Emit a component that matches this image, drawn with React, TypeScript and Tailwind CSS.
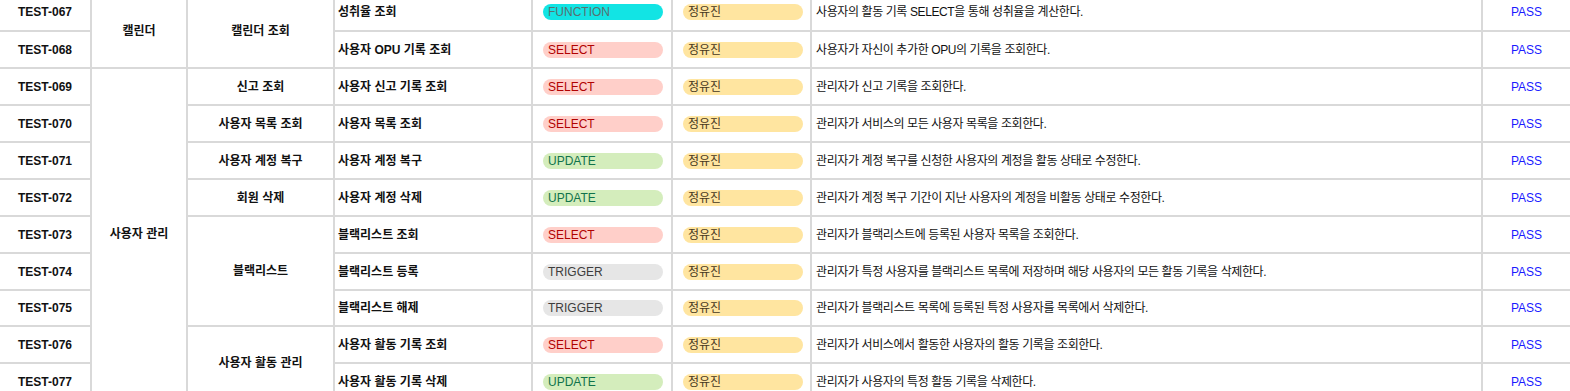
import React from "react";

type Kind = "FUNCTION" | "SELECT" | "UPDATE" | "TRIGGER";

interface Row {
  id: string;
  group?: { text: string; span: string };
  feature?: { text: string; span: string };
  name: string;
  kind: Kind;
  desc: string;
}

const rows: Row[] = [
  {
    id: "TEST-067",
    group: { text: "캘린더", span: "row-span-2" },
    feature: { text: "캘린더 조회", span: "row-span-2" },
    name: "성취율 조회",
    kind: "FUNCTION",
    desc: "사용자의 활동 기록 SELECT을 통해 성취율을 계산한다.",
  },
  { id: "TEST-068", name: "사용자 OPU 기록 조회", kind: "SELECT", desc: "사용자가 자신이 추가한 OPU의 기록을 조회한다." },
  {
    id: "TEST-069",
    group: { text: "사용자 관리", span: "row-span-9" },
    feature: { text: "신고 조회", span: "" },
    name: "사용자 신고 기록 조회",
    kind: "SELECT",
    desc: "관리자가 신고 기록을 조회한다.",
  },
  {
    id: "TEST-070",
    feature: { text: "사용자 목록 조회", span: "" },
    name: "사용자 목록 조회",
    kind: "SELECT",
    desc: "관리자가 서비스의 모든 사용자 목록을 조회한다.",
  },
  {
    id: "TEST-071",
    feature: { text: "사용자 계정 복구", span: "" },
    name: "사용자 계정 복구",
    kind: "UPDATE",
    desc: "관리자가 계정 복구를 신청한 사용자의 계정을 활동 상태로 수정한다.",
  },
  {
    id: "TEST-072",
    feature: { text: "회원 삭제", span: "" },
    name: "사용자 계정 삭제",
    kind: "UPDATE",
    desc: "관리자가 계정 복구 기간이 지난 사용자의 계정을 비활동 상태로 수정한다.",
  },
  {
    id: "TEST-073",
    feature: { text: "블랙리스트", span: "row-span-3" },
    name: "블랙리스트 조회",
    kind: "SELECT",
    desc: "관리자가 블랙리스트에 등록된 사용자 목록을 조회한다.",
  },
  {
    id: "TEST-074",
    name: "블랙리스트 등록",
    kind: "TRIGGER",
    desc: "관리자가 특정 사용자를 블랙리스트 목록에 저장하며 해당 사용자의 모든 활동 기록을 삭제한다.",
  },
  {
    id: "TEST-075",
    name: "블랙리스트 해제",
    kind: "TRIGGER",
    desc: "관리자가 블랙리스트 목록에 등록된 특정 사용자를 목록에서 삭제한다.",
  },
  {
    id: "TEST-076",
    feature: { text: "사용자 활동 관리", span: "row-span-2" },
    name: "사용자 활동 기록 조회",
    kind: "SELECT",
    desc: "관리자가 서비스에서 활동한 사용자의 활동 기록을 조회한다.",
  },
  { id: "TEST-077", name: "사용자 활동 기록 삭제", kind: "UPDATE", desc: "관리자가 사용자의 특정 활동 기록을 삭제한다." },
];

const chip: Record<Kind, string> = {
  FUNCTION: "bg-[#12e4e4] text-[#587070]",
  SELECT: "bg-[#ffcfc9] text-[#b10202]",
  UPDATE: "bg-[#d4edbc] text-[#11734b]",
  TRIGGER: "bg-[#e6e6e6] text-[#3d3d3d]",
};

export default function App() {
  return (
    <div
      className="h-[391px] w-[1570px] overflow-hidden bg-white text-[12px] text-[#111]"
      style={{ fontFamily: '"Liberation Sans", "Noto Sans CJK KR", sans-serif' }}
    >
      <div className="-mt-[6px] grid grid-cols-[90px_94px_145px_196px_138px_137px_669px_87px] grid-rows-[36px_35px_35px_35px_35px_35px_35px_35px_34px_35px_35px] gap-[2px] bg-[#d9d9d9]">
        {rows.map((r) => (
          <React.Fragment key={r.id}>
            <div className="flex items-center justify-center bg-white font-bold">{r.id}</div>
            {r.group && (
              <div className={`flex items-center justify-center bg-white font-bold ${r.group.span}`}>{r.group.text}</div>
            )}
            {r.feature && (
              <div className={`flex items-center justify-center bg-white font-bold ${r.feature.span}`}>{r.feature.text}</div>
            )}
            <div className="flex items-center bg-white pl-[3px] font-bold">{r.name}</div>
            <div className="flex items-center bg-white pl-[10px]">
              <span className={`flex h-[16px] w-[120px] items-center rounded-full px-[5px] leading-none ${chip[r.kind]}`}>
                {r.kind}
              </span>
            </div>
            <div className="flex items-center bg-white pl-[10px]">
              <span className="flex h-[16px] w-[120px] items-center rounded-full bg-[#ffe5a0] px-[5px] leading-none text-[#473821]">
                정유진
              </span>
            </div>
            <div className="flex items-center bg-white pl-[4px] tracking-[-0.4px]">{r.desc}</div>
            <div className="flex items-center justify-center bg-white text-[#1a1aff]">PASS</div>
          </React.Fragment>
        ))}
      </div>
    </div>
  );
}
